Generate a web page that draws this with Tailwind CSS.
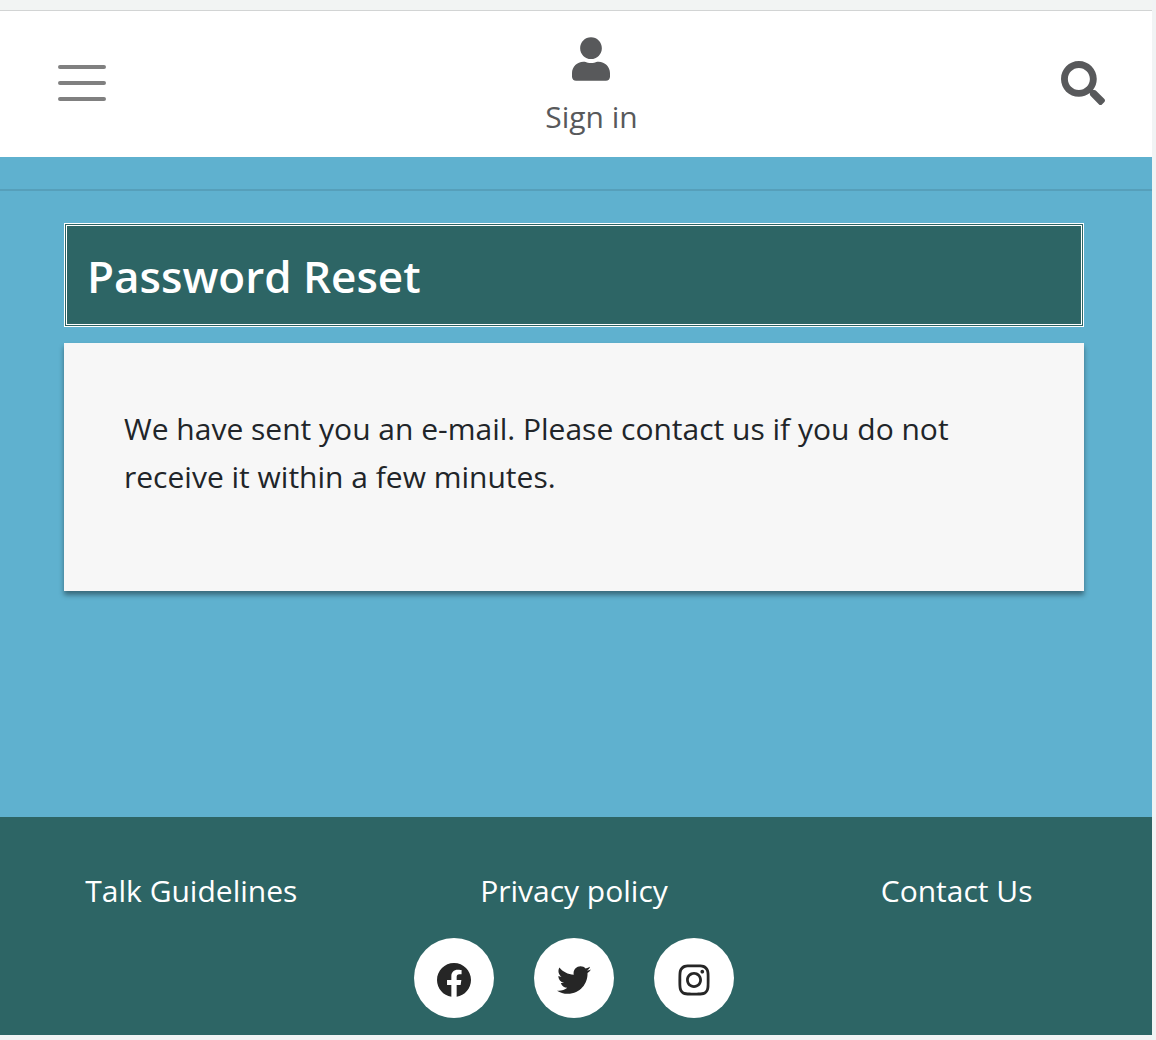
<!DOCTYPE html>
<html lang="en">
<head>
<meta charset="utf-8">
<meta name="viewport" content="width=device-width, initial-scale=1">
<title>Password Reset</title>
<script src="https://cdn.jsdelivr.net/npm/@tailwindcss/browser@4"></script>
</head>
<body class="flex min-h-screen flex-col bg-[#f1f3f4] pr-1 pb-[5px] font-['Open_Sans','Noto_Sans',sans-serif] text-[30px] leading-[48px]">
<div class="h-[11px] border-b border-[#d2d4d4] bg-[#f2f4f3]"></div>
<header class="flex h-[146px] items-center justify-between bg-white pr-[47px] pb-0.5 pl-[42px] text-[#58595b]">
  <button type="button" aria-label="Menu" class="px-4">
    <svg class="h-9 w-12" viewBox="0 0 48 36" fill="none" stroke="#808080" stroke-width="4" stroke-linecap="round"><path d="M2 2H46M2 18H46M2 34H46"/></svg>
  </button>
  <a href="#" class="flex flex-col items-center gap-3 pt-3">
    <svg class="h-11 w-[38px]" viewBox="0 0 448 512" fill="currentColor" aria-hidden="true"><path d="M224 256c70.700 0 128-57.300 128-128S294.700 0 224 0 96 57.300 96 128s57.300 128 128 128zm89.600 32h-16.700c-22.200 10.200-46.900 16-72.900 16s-50.600-5.800-72.900-16h-16.700C60.200 288 0 348.200 0 422.400V464c0 26.500 21.500 48 48 48h352c26.500 0 48-21.500 48-48v-41.600c0-74.200-60.200-134.400-134.400-134.400z"/></svg>
    <span>Sign in</span>
  </a>
  <button type="button" aria-label="Search">
    <svg class="size-11" viewBox="0 0 512 512" fill="currentColor"><path d="M505 442.700L405.300 343c-4.500-4.500-10.600-7-17-7H372c27.600-35.300 44-79.700 44-128C416 93.100 322.900 0 208 0S0 93.100 0 208s93.100 208 208 208c48.300 0 92.700-16.400 128-44v16.300c0 6.400 2.500 12.500 7 17l99.700 99.700c9.400 9.400 24.600 9.400 33.900 0l28.300-28.300c9.400-9.400 9.400-24.600.1-34zM208 336c-70.700 0-128-57.200-128-128 0-70.700 57.200-128 128-128 70.700 0 128 57.200 128 128 0 70.700-57.200 128-128 128z"/></svg>
  </button>
</header>
<main class="flex-1 bg-[#5fb1cf] pt-8">
  <hr class="border-t-2 border-[#569fba]">
  <div class="mt-8 mr-[68px] ml-16">
    <h1 class="border-3 border-double border-white bg-[#2d6565] px-5 pt-[21px] pb-[19px] text-[44px] leading-[58px] font-semibold text-white">Password Reset</h1>
    <section class="mt-4 min-h-[248px] bg-[#f7f7f7] px-[60px] py-[62px] text-[#212529] shadow-[0_4px_5px_rgba(0,0,0,0.4)]">
      <p>We have sent you an e-mail. Please contact us if you do not receive it within a few minutes.</p>
    </section>
  </div>
</main>
<footer class="bg-[#2d6565] pt-[50px] pr-1 pb-[17px] text-white">
  <nav class="grid grid-cols-3 text-center">
    <a href="#">Talk Guidelines</a>
    <a href="#">Privacy policy</a>
    <a href="#">Contact Us</a>
  </nav>
  <div class="mt-[23px] flex justify-center gap-10 text-[#262626]">
    <a href="#" aria-label="Facebook" class="flex size-20 items-center justify-center rounded-full bg-white pt-1">
      <svg class="size-[34px]" viewBox="8 8 496 496" fill="currentColor"><path d="M504 256C504 119 393 8 256 8S8 119 8 256c0 123.780 90.690 226.380 209.250 245V327.690h-63V256h63v-54.640c0-62.150 37-96.480 93.670-96.480 27.140 0 55.520 4.840 55.520 4.840v61h-31.280c-30.800 0-40.410 19.120-40.410 38.730V256h68.780l-11 71.690h-57.780V501C413.310 482.380 504 379.780 504 256z"/></svg>
    </a>
    <a href="#" aria-label="Twitter" class="flex size-20 items-center justify-center rounded-full bg-white pt-1">
      <svg class="size-[34px]" viewBox="0 0 512 512" fill="currentColor"><path d="M459.370 151.716c.325 4.548.325 9.097.325 13.645 0 138.720-105.583 298.558-298.558 298.558-59.452 0-114.680-17.219-161.137-47.106 8.447.974 16.568 1.299 25.340 1.299 49.055 0 94.213-16.568 130.274-44.832-46.132-.975-84.792-31.188-98.112-72.772 6.498.974 12.995 1.624 19.818 1.624 9.421 0 18.843-1.300 27.614-3.573-48.081-9.747-84.143-51.980-84.143-102.985v-1.299c13.969 7.797 30.214 12.670 47.431 13.319-28.264-18.843-46.781-51.005-46.781-87.391 0-19.492 5.197-37.360 14.294-52.954 51.655 63.675 129.300 105.258 216.365 109.807-1.624-7.797-2.599-15.918-2.599-24.040 0-57.828 46.782-104.934 104.934-104.934 30.213 0 57.502 12.670 76.670 33.137 23.715-4.548 46.456-13.320 66.599-25.340-7.798 24.366-24.366 44.833-46.132 57.827 21.117-2.273 41.584-8.122 60.426-16.243-14.292 20.791-32.161 39.308-52.628 54.253z"/></svg>
    </a>
    <a href="#" aria-label="Instagram" class="flex size-20 items-center justify-center rounded-full bg-white pt-1">
      <svg class="size-8" viewBox="-7 25 462 462" fill="currentColor"><path d="M224.100 141c-63.600 0-114.900 51.300-114.900 114.900s51.300 114.900 114.900 114.900S339 319.500 339 255.900 287.700 141 224.100 141zm0 189.600c-41.100 0-74.700-33.500-74.700-74.700s33.500-74.700 74.700-74.700 74.700 33.500 74.700 74.700-33.600 74.700-74.700 74.700zm146.400-194.300c0 14.900-12 26.800-26.800 26.800-14.900 0-26.800-12-26.800-26.800s12-26.800 26.800-26.800 26.800 12 26.800 26.800zm76.100 27.200c-1.700-35.900-9.900-67.700-36.200-93.900-26.200-26.200-58-34.400-93.900-36.200-37-2.100-147.900-2.100-184.900 0-35.800 1.700-67.600 9.900-93.900 36.100s-34.400 58-36.200 93.900c-2.100 37-2.100 147.900 0 184.900 1.700 35.900 9.900 67.700 36.200 93.900s58 34.400 93.900 36.200c37 2.100 147.900 2.100 184.900 0 35.900-1.700 67.700-9.900 93.900-36.200 26.200-26.200 34.400-58 36.200-93.900 2.100-37 2.100-147.800 0-184.800zM398.800 388c-7.800 19.600-22.900 34.700-42.600 42.600-29.500 11.700-99.500 9-132.100 9s-102.700 2.600-132.100-9c-19.600-7.800-34.700-22.900-42.600-42.600-11.700-29.500-9-99.500-9-132.100s-2.600-102.700 9-132.100c7.800-19.600 22.900-34.700 42.600-42.600 29.500-11.700 99.500-9 132.100-9s102.700-2.600 132.100 9c19.600 7.800 34.700 22.900 42.600 42.600 11.700 29.500 9 99.500 9 132.100s2.700 102.700-9 132.100z"/></svg>
    </a>
  </div>
</footer>
</body>
</html>
